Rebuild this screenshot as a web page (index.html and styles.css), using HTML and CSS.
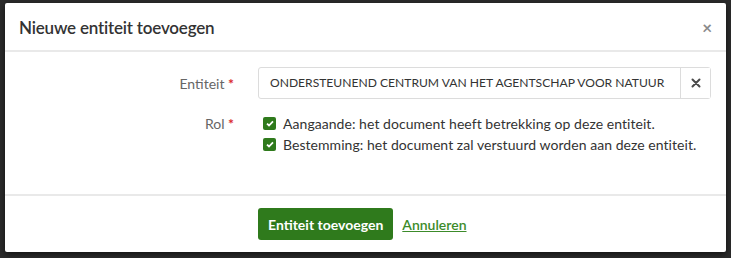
FILE: index.html
```html
<!DOCTYPE html>
<html lang="nl">
<head>
<meta charset="utf-8">
<link rel="stylesheet" href="styles.css">
</head>
<body>
<div class="modal">
  <div class="modal-header">
    <h1 class="modal-title">Nieuwe entiteit toevoegen</h1>
    <span class="close">&#215;</span>
  </div>
  <div class="modal-body">
    <div class="row">
      <label class="label">Entiteit <span class="req">*</span></label>
      <div class="control">
        <div class="input-group">
          <div class="input">ONDERSTEUNEND CENTRUM VAN HET AGENTSCHAP VOOR NATUUR</div>
          <button class="clear"><svg width="10" height="10" viewBox="0 0 10 10"><path d="M1.5 1.5 L8.5 8.5 M8.5 1.5 L1.5 8.5" stroke="#4a4a4a" stroke-width="2" stroke-linecap="round"/></svg></button>
        </div>
      </div>
    </div>
    <div class="row row-rol">
      <label class="label">Rol <span class="req">*</span></label>
      <div class="control checks">
        <div class="check"><span class="box"><svg width="8" height="7" viewBox="0 0 8 7"><path d="M1 3.6 L3 5.5 L7 1.3" fill="none" stroke="#fff" stroke-width="1.8"/></svg></span>Aangaande: het document heeft betrekking op deze entiteit.</div>
        <div class="check"><span class="box"><svg width="8" height="7" viewBox="0 0 8 7"><path d="M1 3.6 L3 5.5 L7 1.3" fill="none" stroke="#fff" stroke-width="1.8"/></svg></span>Bestemming: het document zal verstuurd worden aan deze entiteit.</div>
      </div>
    </div>
  </div>
  <div class="modal-footer">
    <div class="spacer"></div>
    <div class="actions">
      <button class="btn">Entiteit toevoegen</button>
      <a class="link" href="#">Annuleren</a>
    </div>
  </div>
</div>
</body>
</html>
```
FILE: styles.css
```css
html, body {
  margin: 0;
  padding: 0;
}
body {
  width: 731px;
  height: 258px;
  background: #2b2b2b;
  font-family: "Lato", "Open Sans", sans-serif;
  color: #333;
  padding: 3px 5px 0 5px;
  box-sizing: border-box;
  overflow: hidden;
}
.modal {
  width: 721px;
  height: 249px;
  background: #fff;
  border-radius: 2px;
  box-shadow: 0 2px 6px rgba(0,0,0,0.6);
  display: flex;
  flex-direction: column;
}
.modal-header {
  height: 46px;
  flex: none;
  border-bottom: 2px solid #e9e9e9;
  display: flex;
  align-items: center;
  justify-content: space-between;
  padding: 1px 14px 0 14px;
}
.modal-title {
  margin: 0;
  font-size: 17px;
  font-weight: 600;
  color: #333;
  letter-spacing: -0.2px;
}
.close {
  font-size: 17px;
  font-weight: 700;
  color: #8a8a8a;
  line-height: 1;
}
.modal-body {
  flex: 1;
  padding: 15px 15px 0 0;
}
.row {
  display: grid;
  grid-template-columns: 229px minmax(0, 1fr);
  column-gap: 24px;
  align-items: center;
}
.control {
  min-width: 0;
}
.label {
  text-align: right;
  font-size: 14px;
  color: #666;
}
.req {
  color: #d9262c;
  font-weight: 700;
}
.input-group {
  display: flex;
  height: 32px;
  border: 1px solid #dcdcdc;
  border-radius: 3px;
  box-sizing: border-box;
}
.input {
  flex: 1;
  min-width: 0;
  padding-left: 11px;
  font-size: 12.1px;
  line-height: 30px;
  color: #333;
  white-space: nowrap;
  overflow: hidden;
}
.clear {
  flex: none;
  width: 30px;
  border: 0;
  border-left: 1px solid #dcdcdc;
  background: #fff;
  padding: 0;
  display: flex;
  align-items: center;
  justify-content: center;
}
.row-rol {
  margin-top: 14px;
  align-items: start;
}
.row-rol .label {
  line-height: 21px;
}
.checks {
  padding-left: 5px;
}
.check {
  display: flex;
  align-items: center;
  font-size: 14px;
  line-height: 21px;
  color: #333;
  letter-spacing: 0.05px;
}
.box {
  width: 13px;
  height: 13px;
  background: #2f7a1c;
  border-radius: 2px;
  display: inline-flex;
  align-items: center;
  justify-content: center;
  margin-right: 7px;
}
.modal-footer {
  height: 58px;
  flex: none;
  border-top: 2px solid #e9e9e9;
  display: grid;
  grid-template-columns: 229px 1fr;
  column-gap: 24px;
  align-items: center;
  box-sizing: border-box;
}
.actions {
  display: flex;
  align-items: center;
  gap: 9px;
}
.btn {
  height: 32px;
  padding: 0 10px;
  background: #2f7a1c;
  color: #fff;
  border: 0;
  border-radius: 3px;
  font-family: inherit;
  font-size: 14px;
  font-weight: 700;
}
.link {
  color: #3c8b2a;
  font-size: 14px;
  font-weight: 600;
  text-decoration: underline;
}
```
